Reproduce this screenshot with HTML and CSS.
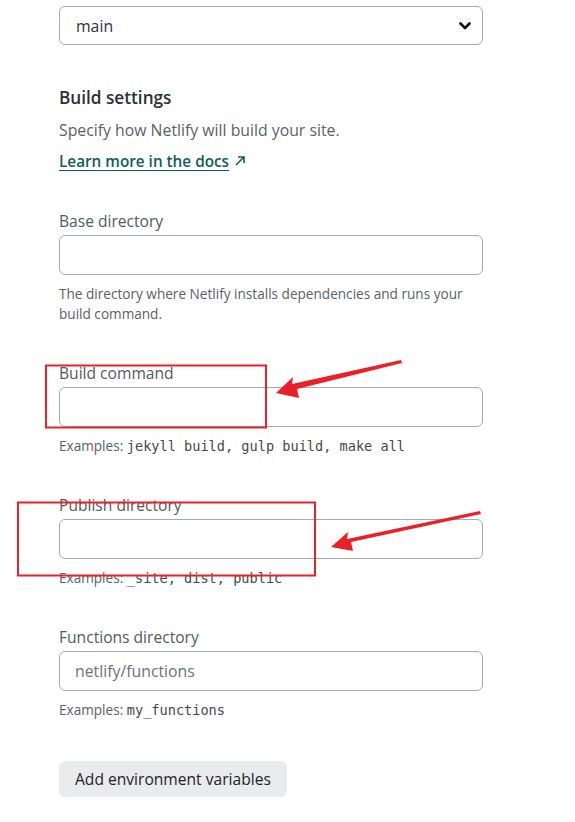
FILE: index.html
```html
<!DOCTYPE html>
<html lang="en">
<head>
<meta charset="utf-8">
<title>Build settings</title>
<link rel="stylesheet" href="styles.css">
</head>
<body>
<div class="page">
  <div class="select">
    <span>main</span>
    <svg class="chev" width="12" height="8" viewBox="0 0 12 8"><path d="M1.5 1.5 L6 6 L10.5 1.5" fill="none" stroke="#111" stroke-width="2.6" stroke-linecap="round" stroke-linejoin="round"/></svg>
  </div>

  <h2 class="heading">Build settings</h2>
  <p class="desc">Specify how Netlify will build your site.</p>
  <p class="linkrow"><a class="link" href="#">Learn more in the docs</a> <svg class="ext" width="12" height="12" viewBox="0 0 12 12"><path d="M2 10 L10 2 M4 2 H10 V8" fill="none" stroke="#0f5e5a" stroke-width="1.6"/></svg></p>

  <div class="field first">
    <label class="label">Base directory</label>
    <div class="input"></div>
    <p class="help">The directory where Netlify installs dependencies and runs your build command.</p>
  </div>

  <div class="field">
    <label class="label">Build command</label>
    <div class="input"></div>
    <p class="help">Examples: <code>jekyll build, gulp build, make all</code></p>
  </div>

  <div class="field">
    <label class="label">Publish directory</label>
    <div class="input"></div>
    <p class="help">Examples: <code>_site, dist, public</code></p>
  </div>

  <div class="field">
    <label class="label">Functions directory</label>
    <div class="input"><span class="ph">netlify/functions</span></div>
    <p class="help">Examples: <code>my_functions</code></p>
  </div>

  <button class="btn">Add environment variables</button>
</div>

<svg class="annot" width="575" height="822" viewBox="0 0 575 822">
  <rect x="46" y="365.5" width="220" height="62" fill="none" stroke="#e8212b" stroke-width="2"/>
  <rect x="18" y="502.5" width="297" height="73" fill="none" stroke="#e8212b" stroke-width="2"/>
  <polygon points="276,393 293,377 292,384 401,360 402,363 297,389 299,398" fill="#ea1f27"/>
  <polygon points="331,547 348,532 347,539 480,511 481,514 351,542 353,551" fill="#ea1f27"/>
</svg>
</body>
</html>
```
FILE: styles.css
```css
* { box-sizing: border-box; }
html, body { margin: 0; padding: 0; background: #fff; }
body { font-family: "Open Sans", "Noto Sans", sans-serif; color: #2f3338; }
.page { padding: 6px 0 0 59px; width: 483px; position: relative; }

.select {
  height: 39px;
  border: 1px solid #a5acb5;
  border-radius: 6px;
  display: flex;
  align-items: center;
  justify-content: space-between;
  padding: 0 11px 0 16px;
  font-size: 15.8px;
  color: #2f3338;
}
.chev { display: block; }

.heading { margin: 41px 0 0; font-size: 17.2px; line-height: 24px; font-weight: 600; color: #2b2f33; }
.desc { margin: 9px 0 0; font-size: 15.8px; line-height: 22px; color: #5b6168; }
.linkrow { margin: 9px 0 0; font-size: 15.3px; line-height: 22px; display: flex; align-items: center; gap: 5px; }
.link { color: #0f5e5a; font-weight: 600; text-decoration: underline; text-underline-offset: 3px; }
.ext { display: block; }

.field { margin-top: 39px; }
.label { display: block; font-size: 15.6px; line-height: 20px; color: #545a61; }
.input {
  margin-top: 4px;
  height: 40px;
  border: 1px solid #a5acb5;
  border-radius: 6px;
  display: flex;
  align-items: center;
  padding: 0 15px;
}
.ph { font-size: 15.8px; color: #6d737a; }
.help { margin: 9px 0 0; font-size: 13.6px; line-height: 20px; color: #5b6168; }
code { font-family: "DejaVu Sans Mono", monospace; font-size: 13.6px; line-height: 1; color: #45494e; }

.btn {
  margin-top: 41px;
  display: block;
  height: 36px;
  border: 0;
  border-radius: 6px;
  background: #e9ebed;
  font-family: inherit;
  font-size: 15.6px;
  color: #1f2327;
  padding: 0 16px;
  white-space: nowrap;
}

.annot { position: absolute; left: 0; top: 0; pointer-events: none; }
```
